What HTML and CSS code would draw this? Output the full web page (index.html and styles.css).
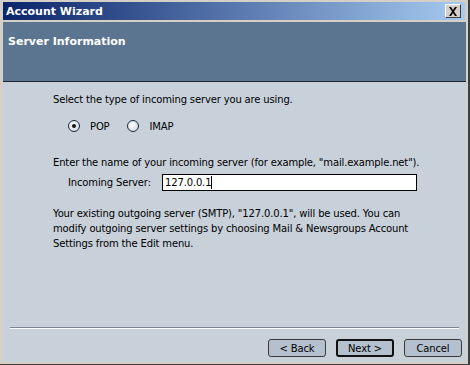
FILE: index.html
```html
<html>
  <head>
    <link rel="stylesheet" href="styles.css">
  </head>
  <body>
    <div class="window">
      <div class="titlebar">
        <span class="title">Account Wizard</span>
        <span class="closebtn">
          <svg width="10" height="9" viewBox="0 0 10 9">
            <path d="M1 0 L3 0 L5 3 L7 0 L9 0 L6 4.5 L9 9 L7 9 L5 6 L3 9 L1 9 L4 4.5 Z" fill="#000"/>
          </svg>
        </span>
      </div>
      <div class="header">Server Information</div>
      <div class="content">
        <p class="line">Select the type of incoming server you are using.</p>
        <div class="radios">
          <span class="radio checked"></span><span class="rlabel">POP</span>
          <span class="radio"></span><span class="rlabel">IMAP</span>
        </div>
        <p class="line second">Enter the name of your incoming server (for example, "mail.example.net").</p>
        <div class="field">
          <span class="flabel">Incoming Server:</span>
          <div class="textbox">127.0.0.1<span class="caret"></span></div>
        </div>
        <p class="info">Your existing outgoing server (SMTP), "127.0.0.1", will be used. You can modify outgoing server settings by choosing Mail &amp; Newsgroups Account Settings from the Edit menu.</p>
        <div class="spacer"></div>
        <div class="separator"></div>
        <div class="buttons">
          <span class="btn">&lt; Back</span>
          <span class="btn default">Next &gt;</span>
          <span class="btn">Cancel</span>
        </div>
      </div>
    </div>
  </body>
</html>
```

FILE: styles.css
```css
html, body {
    margin: 0;
    padding: 0;
    background-color: #d4d0c8;
}

.window {
    width: 470px;
    height: 365px;
    box-sizing: border-box;
    padding: 2px 2px 2px 3px;
    border-right: 2px solid #404040;
    border-bottom: 1px solid #404040;
    display: flex;
    flex-direction: column;
    font-family: "DejaVu Sans", sans-serif;
    font-size: 10px;
    letter-spacing: -0.15px;
    color: #000;
}

.titlebar {
    height: 18px;
    margin-right: 1px;
    background: linear-gradient(to right, #0a246a, #a6caf0);
    display: flex;
    align-items: center;
    justify-content: space-between;
    padding: 0 4px 0 3px;
}

.title {
    color: #fff;
    font-weight: bold;
    font-size: 11px;
    letter-spacing: 0;
}

.closebtn {
    width: 16px;
    height: 14px;
    box-sizing: border-box;
    background-color: #d4d0c8;
    border: 1px solid;
    border-color: #fff #404040 #404040 #fff;
    display: flex;
    align-items: center;
    justify-content: center;
}

.header {
    margin-top: 2px;
    height: 60px;
    background-color: #5b7590;
    border-bottom: 1px solid #1a2433;
    color: #fff;
    font-weight: bold;
    font-size: 11px;
    letter-spacing: 0;
    padding: 13px 0 0 5px;
    box-sizing: border-box;
}

.content {
    flex: 1;
    background-color: #c8d0da;
    display: flex;
    flex-direction: column;
}

.line {
    margin: 12px 0 0 50px;
}

.second {
    margin-top: 25px;
}

.radios {
    display: flex;
    align-items: center;
    margin: 15px 0 0 65px;
}

.radio {
    width: 12px;
    height: 12px;
    box-sizing: border-box;
    border-radius: 50%;
    border: 1px solid #1c2a3a;
    background: radial-gradient(circle at 40% 40%, #fff, #c4d0dc);
    display: flex;
    align-items: center;
    justify-content: center;
}

.radio.checked::after {
    content: "";
    width: 4px;
    height: 4px;
    border-radius: 50%;
    background-color: #111;
}

.rlabel {
    margin: 0 18px 0 10px;
}

.field {
    display: flex;
    align-items: center;
    margin: 6px 0 0 65px;
}

.flabel {
    width: 94px;
}

.textbox {
    width: 255px;
    height: 17px;
    box-sizing: border-box;
    background-color: #fff;
    border: 1px solid #000;
    padding: 1px 2px;
    display: flex;
    align-items: center;
}

.caret {
    width: 1px;
    height: 13px;
    background-color: #000;
}

.info {
    margin: 15px 44px 0 50px;
    line-height: 15px;
}

.spacer {
    flex: 1;
}

.separator {
    margin: 0 7px;
    border-top: 1px solid #7c8694;
    border-bottom: 1px solid #fff;
}

.buttons {
    display: flex;
    justify-content: flex-end;
    gap: 10px;
    padding: 10px 4px 5px 0;
}

.btn {
    width: 58px;
    height: 18px;
    box-sizing: border-box;
    border: 1px solid #3a3a3a;
    border-radius: 3px;
    background-color: #b5c0ce;
    display: flex;
    align-items: center;
    justify-content: center;
}

.btn.default {
    border: 2px solid #111;
}
```
